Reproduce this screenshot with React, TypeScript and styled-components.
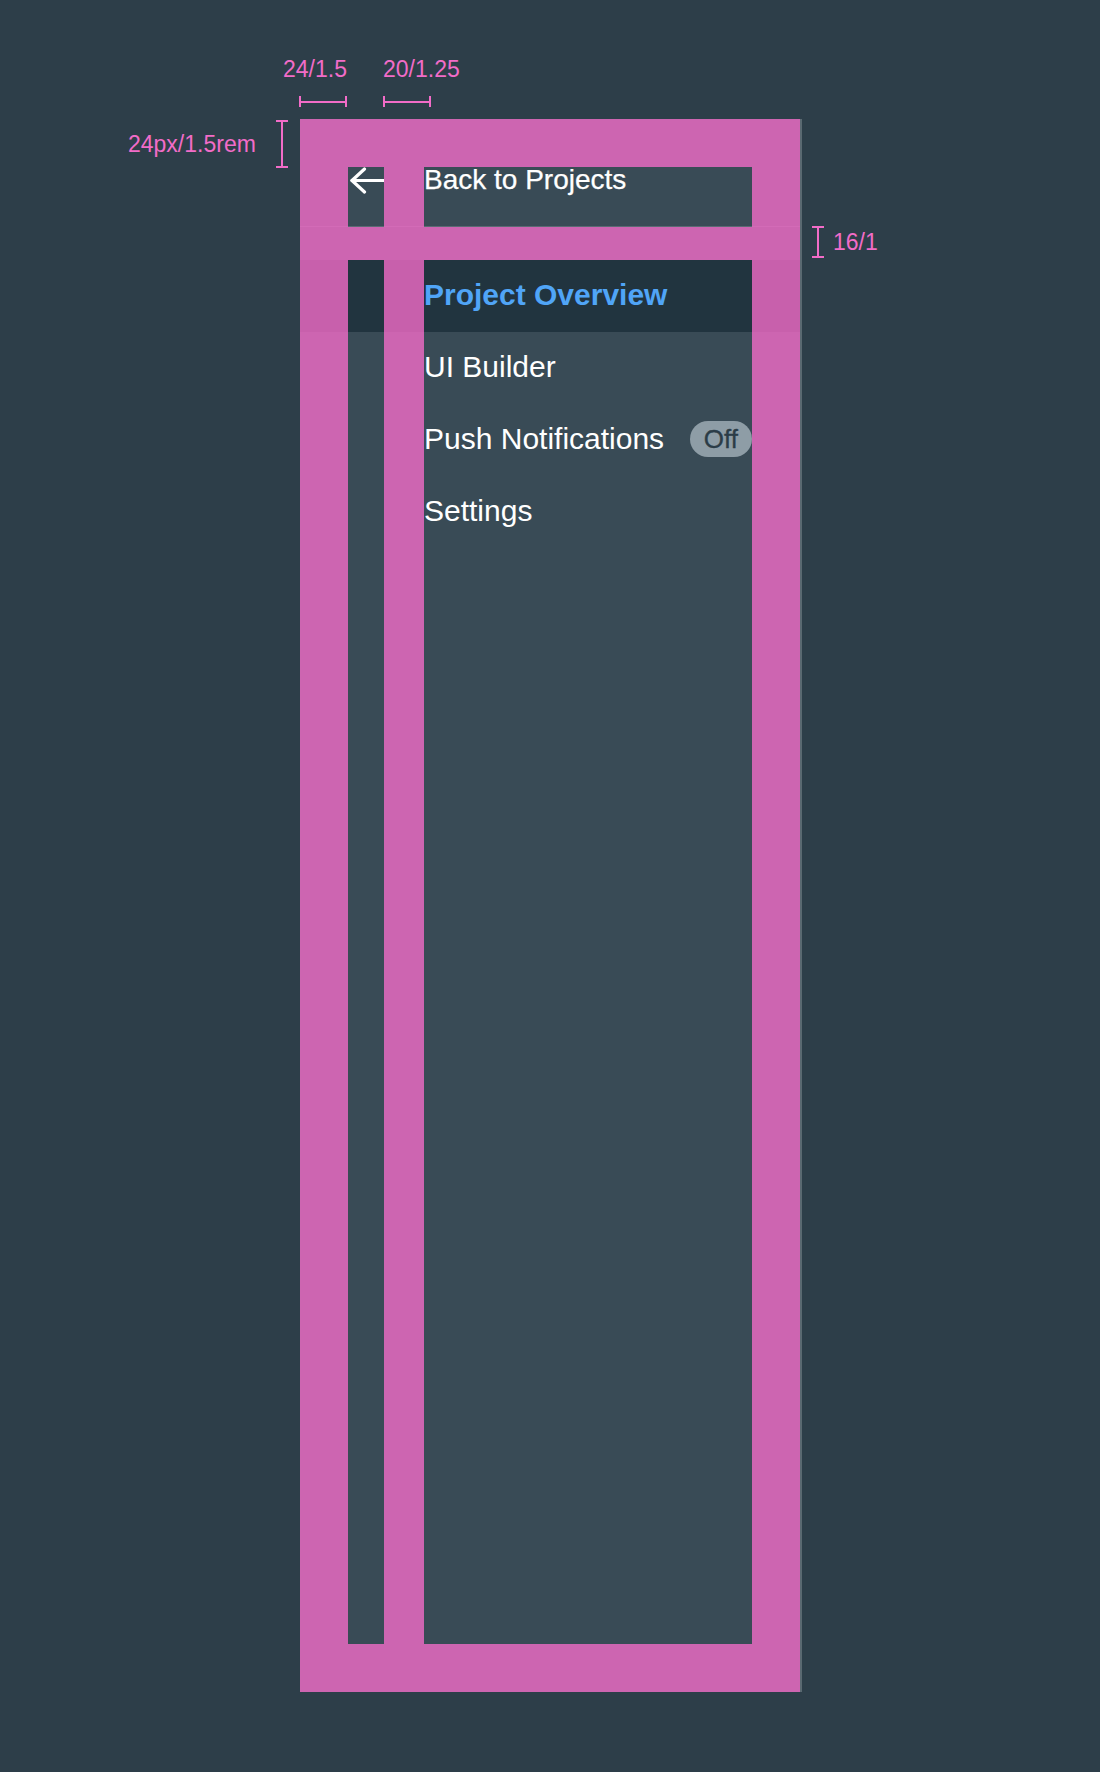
import React from "react";
import styled, { createGlobalStyle } from "styled-components";

const PINK = "#f26cc8";

const GlobalStyle = createGlobalStyle`
  html, body {
    margin: 0;
    padding: 0;
    background: #2d3e49;
  }
  body {
    font-family: "Liberation Sans", Arial, sans-serif;
    -webkit-font-smoothing: antialiased;
  }
  *, *::before, *::after {
    box-sizing: border-box;
  }
`;

const Canvas = styled.div`
  position: relative;
  width: 1100px;
  height: 1772px;
  padding: 119px 0 0 300px;
`;

const Sidebar = styled.aside`
  position: relative;
  width: 502px;
  height: 1573px;
  background: #394b56;
  border-right: 2px solid #5a6971;
  display: flex;
  flex-direction: column;
`;

const Header = styled.header`
  display: grid;
  grid-template-columns: 36px 1fr;
  column-gap: 40px;
  align-items: start;
  height: 108px;
  padding: 48px 48px 0;
  border-bottom: 1px solid #5b6a73;
`;

const BackIcon = styled.svg`
  display: block;
  width: 36px;
  height: 28px;
  color: #ffffff;
`;

const BackLabel = styled.span`
  font-size: 28px;
  line-height: 26px;
  color: #ffffff;
  -webkit-text-stroke: 0.25px #ffffff;
  white-space: nowrap;
`;

const Nav = styled.nav`
  display: flex;
  flex-direction: column;
  margin-top: 33px;
`;

const NavItem = styled.div<{ $active?: boolean }>`
  display: flex;
  align-items: center;
  height: 72px;
  padding: 0 48px 2px 124px;
  font-size: 30px;
  white-space: nowrap;
  font-weight: ${(p) => (p.$active ? 700 : 400)};
  color: ${(p) => (p.$active ? "#50a5f7" : "#ffffff")};
  background: ${(p) => (p.$active ? "#21343f" : "transparent")};
`;

const Pill = styled.span`
  margin-left: auto;
  height: 36px;
  padding: 0 14px;
  border-radius: 18px;
  background: #8e9da6;
  color: #2b3c47;
  font-size: 26px;
  line-height: 36px;
  -webkit-text-stroke: 0.3px #2b3c47;
`;

const SpacingOverlay = styled.div`
  position: absolute;
  inset: 0;
  display: grid;
  grid-template-columns: 48px 36px 40px 1fr 48px;
  grid-template-rows: 48px 60px 33px 1fr 48px;
  opacity: 0.8;
  pointer-events: none;
`;

const Band = styled.div<{ $area: string }>`
  grid-area: ${(p) => p.$area};
  background: ${PINK};
`;

/* Dimension annotations placed on the design canvas */
const Dimension = styled.div<{
  $x: number;
  $y: number;
  $dir: "column" | "row";
  $align: string;
  $gap: number;
}>`
  position: absolute;
  left: ${(p) => p.$x}px;
  top: ${(p) => p.$y}px;
  display: flex;
  flex-direction: ${(p) => p.$dir};
  align-items: ${(p) => p.$align};
  gap: ${(p) => p.$gap}px;
`;

const DimLabel = styled.span`
  font-size: 23px;
  line-height: 23px;
  color: ${PINK};
  white-space: nowrap;
`;

const HBracket = styled.div<{ $len: number }>`
  position: relative;
  width: ${(p) => p.$len}px;
  height: 11px;
  border-left: 2px solid ${PINK};
  border-right: 2px solid ${PINK};
  &::after {
    content: "";
    position: absolute;
    left: 0;
    right: 0;
    top: 4.5px;
    height: 2px;
    background: ${PINK};
  }
`;

const VBracket = styled.div<{ $len: number }>`
  position: relative;
  width: 12px;
  height: ${(p) => p.$len}px;
  border-top: 2px solid ${PINK};
  border-bottom: 2px solid ${PINK};
  &::after {
    content: "";
    position: absolute;
    top: 0;
    bottom: 0;
    left: 5px;
    width: 2px;
    background: ${PINK};
  }
`;

const items = [
  { label: "Project Overview", active: true },
  { label: "UI Builder" },
  { label: "Push Notifications", badge: "Off" },
  { label: "Settings" },
];

const bands = [
  "1 / 1 / 2 / -1",
  "3 / 1 / 4 / -1",
  "5 / 1 / 6 / -1",
  "1 / 1 / -1 / 2",
  "1 / 3 / -1 / 4",
  "1 / 5 / -1 / 6",
];

export default function App() {
  return (
    <>
      <GlobalStyle />
      <Canvas>
        <Sidebar>
          <Header>
            <BackIcon viewBox="0 0 36 28" fill="none">
              <polyline
                points="16.5,2 4,13.5 16.5,25"
                stroke="currentColor"
                strokeWidth="3.2"
                strokeLinecap="round"
                strokeLinejoin="round"
              />
              <line
                x1="4"
                y1="13.5"
                x2="36"
                y2="13.5"
                stroke="currentColor"
                strokeWidth="3.2"
                strokeLinecap="round"
              />
            </BackIcon>
            <BackLabel>Back to Projects</BackLabel>
          </Header>
          <Nav>
            {items.map((it) => (
              <NavItem key={it.label} $active={it.active}>
                {it.label}
                {it.badge && <Pill>{it.badge}</Pill>}
              </NavItem>
            ))}
          </Nav>
          <SpacingOverlay>
            {bands.map((a) => (
              <Band key={a} $area={a} />
            ))}
          </SpacingOverlay>
        </Sidebar>

        <Dimension $x={283} $y={58} $dir="column" $align="flex-end" $gap={15}>
          <DimLabel>24/1.5</DimLabel>
          <HBracket $len={48} />
        </Dimension>
        <Dimension $x={383} $y={58} $dir="column" $align="flex-start" $gap={15}>
          <DimLabel>20/1.25</DimLabel>
          <HBracket $len={48} />
        </Dimension>
        <Dimension $x={128} $y={120} $dir="row" $align="center" $gap={20}>
          <DimLabel>24px/1.5rem</DimLabel>
          <VBracket $len={48} />
        </Dimension>
        <Dimension $x={812} $y={226} $dir="row" $align="center" $gap={9}>
          <VBracket $len={32} />
          <DimLabel>16/1</DimLabel>
        </Dimension>
      </Canvas>
    </>
  );
}
